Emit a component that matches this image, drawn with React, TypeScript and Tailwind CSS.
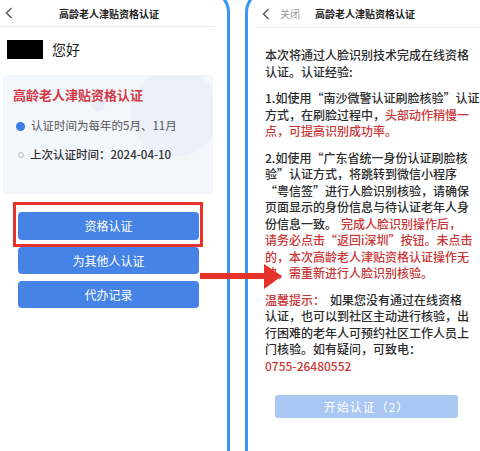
import React from "react";

const font = { fontFamily: '"Noto Sans CJK SC", "Noto Sans", sans-serif' };

function Chevron({ className }: { className?: string }) {
  return (
    <svg width="8" height="12" viewBox="0 0 8 12" className={className}>
      <path d="M6.5 1 L1.5 6 L6.5 11" fill="none" stroke="#555" strokeWidth="1.4" />
    </svg>
  );
}

export default function App() {
  return (
    <div className="relative w-[480px] h-[451px] bg-white overflow-hidden flex" style={font}>
      {/* Left phone */}
      <div className="w-[230px] h-[480px] -mt-[10px] shrink-0 border-t-[3px] border-r-[3px] border-[#3b95f5] rounded-tr-[22px]">
        <div className="w-[215px] flex flex-col">
          <div className="h-[34px] pt-[7px] flex items-center border-b border-[#ececec] relative">
            <Chevron className="ml-[5px]" />
            <div className="flex-1 text-center text-[10px] font-bold text-[#222] pr-[10px]">高龄老人津贴资格认证</div>
          </div>
          <div className="mt-[12px] flex items-center h-[20px]">
            <div className="ml-[7px] w-[36px] h-[19px] bg-black" />
            <div className="ml-[9px] text-[14px] text-[#222] leading-[20px]">您好</div>
          </div>
          <div className="relative mt-[16px] ml-[3px] w-[210px] h-[119px] bg-[#f3f6fb] rounded-[3px] overflow-hidden px-[10px]">
            <div className="absolute left-[128px] top-[-6px] w-[88px] h-[88px] rounded-full bg-[#ebf0f9]" />
            <div className="absolute left-[88px] top-[22px] w-[14px] h-[14px] rounded-full bg-[#e9eff9]" />
            <div className="relative pt-[11px] text-[13px] leading-[18px] font-semibold text-[#d23a47]">高龄老人津贴资格认证</div>
            <div className="relative mt-[13px] flex items-center h-[18px]">
              <div className="ml-[3px] w-[9px] h-[9px] rounded-full bg-[#3d7fe6]" />
              <div className="ml-[6px] text-[11.5px] text-[#555]">认证时间为每年的5月、11月</div>
            </div>
            <div className="relative mt-[11px] flex items-center h-[18px]">
              <div className="ml-[5px] w-[6px] h-[6px] rounded-full border border-[#bbb]" />
              <div className="ml-[6px] text-[11.5px] font-medium text-[#333]">上次认证时间：2024-04-10</div>
            </div>
          </div>
          <div className="mt-[18px] ml-[18px] w-[181px] flex flex-col gap-[7px]">
            <div className="relative">
              <div className="h-[28px] rounded-[4px] bg-[#4683e6] flex items-center justify-center text-white text-[12px]">资格认证</div>
              <div className="absolute left-[-5px] top-[-10px] w-[190px] h-[45px] border-[3px] border-[#e5332c]" />
            </div>
            <div className="h-[27px] rounded-[4px] bg-[#4683e6] flex items-center justify-center text-white text-[12px]">为其他人认证</div>
            <div className="h-[27px] rounded-[4px] bg-[#4683e6] flex items-center justify-center text-white text-[12px]">代办记录</div>
          </div>
        </div>
      </div>

      {/* Right phone */}
      <div className="ml-[15px] w-[240px] h-[480px] -mt-[10px] shrink-0 border-t-[3px] border-l-[3px] border-[#3b95f5] rounded-tl-[22px]">
        <div className="w-[232px] flex flex-col">
          <div className="h-[35px] pt-[7px] ml-[9px] flex items-center border-b border-[#ececec]">
            <Chevron className="ml-[5px]" />
            <div className="ml-[10px] text-[10px] text-[#999]">关闭</div>
            <div className="ml-[15px] text-[10px] font-bold text-[#222]">高龄老人津贴资格认证</div>
          </div>
          <div className="pl-[17px] text-[12px] leading-[16.5px] font-medium text-[#2b2b2b] whitespace-nowrap">
            <div className="mt-[19px]">
              <div>本次将通过人脸识别技术完成在线资格</div>
              <div>认证。认证经验:</div>
            </div>
            <div className="mt-[10px]">
              <div>1.如使用“南沙微警认证刷脸核验”认证</div>
              <div>方式，在刷脸过程中，<span className="text-[#c83636]">头部动作稍慢一</span></div>
              <div className="text-[#c83636]">点，可提高识别成功率。</div>
            </div>
            <div className="mt-[10px]">
              <div>2.如使用“广东省统一身份认证刷脸核</div>
              <div>验”认证方式，将跳转到微信小程序</div>
              <div>“粤信签”进行人脸识别核验，请确保</div>
              <div>页面显示的身份信息与待认证老年人身</div>
              <div>份信息一致。<span className="ml-[4px] text-[#c83636]">完成人脸识别操作后，</span></div>
              <div className="text-[#c83636]">请务必点击“返回i深圳”按钮。未点击</div>
              <div className="text-[#c83636]">的，本次高龄老人津贴资格认证操作无</div>
              <div className="text-[#c83636]">效，需重新进行人脸识别核验。</div>
            </div>
            <div className="mt-[10px]">
              <div><span className="text-[#c83636]">温馨提示：</span><span className="ml-[5px]">如果您没有通过在线资格</span></div>
              <div>认证，也可以到社区主动进行核验，出</div>
              <div>行困难的老年人可预约社区工作人员上</div>
              <div>门核验。如有疑问，可致电：</div>
              <div className="text-[#c83636]">0755-26480552</div>
            </div>
          </div>
          <div className="mt-[21px] ml-[27px] w-[183px] h-[23px] rounded-[3px] bg-[#a9c7f2] flex items-center justify-center text-white text-[12px] tracking-[1px]">
            开始认证（2）
          </div>
        </div>
      </div>

      {/* Red arrow annotation */}
      <svg className="absolute left-[200px] top-[262px]" width="84" height="30" viewBox="0 0 84 30">
        <rect x="0" y="11" width="68" height="6" fill="#e5332c" />
        <polygon points="64,2 82,14 64,27" fill="#e5332c" />
      </svg>
    </div>
  );
}
